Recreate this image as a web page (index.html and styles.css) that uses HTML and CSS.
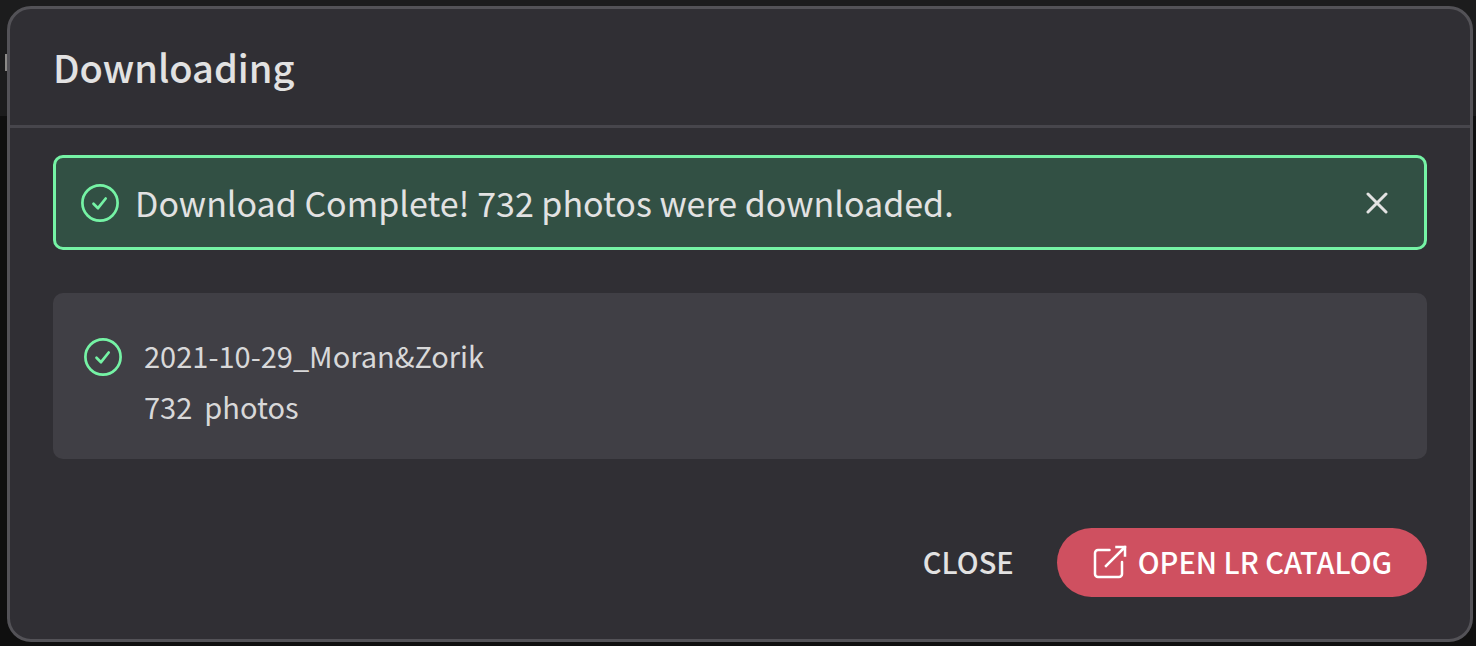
FILE: index.html
```html
<!DOCTYPE html>
<html lang="en">
<head>
    <meta charset="UTF-8">
    <meta name="viewport" content="width=device-width, initial-scale=1.0">
    <title>Downloading</title>
    <link rel="stylesheet" href="styles.css">
</head>
<body>
    <div class="topbar"></div>

    <main class="modal" role="dialog" aria-labelledby="modal-title">
        <header class="modal-header">
            <h1 id="modal-title">Downloading</h1>
        </header>

        <div class="modal-body">
            <div class="alert" role="status">
                <svg class="icon-check" viewBox="0 0 38 38" aria-hidden="true">
                    <circle cx="19" cy="19" r="17.6"/>
                    <path d="M12.5 19.700l4.500 4.500 7.700-9.700"/>
                </svg>
                <p>Download Complete! 732 photos were downloaded.</p>
                <button type="button" class="alert-close" aria-label="Dismiss">
                    <svg viewBox="0 0 22 22" aria-hidden="true">
                        <path d="M2 2l18 18M20 2L2 20"/>
                    </svg>
                </button>
            </div>

            <ul class="downloads">
                <li class="download">
                    <svg class="icon-check" viewBox="0 0 38 38" aria-hidden="true">
                        <circle cx="19" cy="19" r="17.6"/>
                        <path d="M12.5 19.700l4.500 4.500 7.700-9.700"/>
                    </svg>
                    <div class="download-info">
                        <p>2021-10-29_Moran&amp;Zorik</p>
                        <p class="download-count"><span>732</span><span>photos</span></p>
                    </div>
                </li>
            </ul>
        </div>

        <footer class="modal-footer">
            <button type="button" class="btn">CLOSE</button>
            <button type="button" class="btn btn-primary">
                <svg class="icon-open" viewBox="0 0 34 34" aria-hidden="true">
                    <path d="M16.5 5H5a3 3 0 0 0-3 3v21a3 3 0 0 0 3 3h21a3 3 0 0 0 3-3V17"/>
                    <path stroke-linecap="square" stroke-linejoin="miter" d="M13 21L32 2M23.500 2H32v8.500"/>
                </svg>
                OPEN LR CATALOG
            </button>
        </footer>
    </main>
</body>
</html>
```

FILE: styles.css
```css
*,
*:before,
*:after {
    box-sizing: border-box;
}

body {
    margin: 0;
    min-height: 100vh;
    padding: 6px 3px 4px 7px;
    background-color: #0f0f0f;
    color: #e2e2e2;
    font-family: "Noto Sans CJK JP", "Noto Sans", sans-serif;
}

h1,
p,
ul {
    margin: 0;
    padding: 0;
}

button {
    border: 0;
    padding: 0;
    background: none;
    color: inherit;
    font-family: inherit;
    cursor: pointer;
}

svg {
    display: block;
    flex: none;
    fill: none;
    stroke: currentColor;
    stroke-linecap: round;
    stroke-linejoin: round;
}

/* app bar behind the dialog */
.topbar {
    position: absolute;
    top: 0;
    left: 0;
    width: 100%;
    height: 116px;
    background-color: #1c1c1d;
}

.topbar:before {
    content: "";
    position: absolute;
    top: 54px;
    left: 5px;
    width: 3px;
    height: 17px;
    background-color: #8b8987;
}

.modal {
    position: relative;
    border: 3px solid #535257;
    border-radius: 24px;
    background-color: #302f34;
}

.modal-header {
    padding: 28px 43px;
    border-bottom: 3px solid #47464c;
}

.modal-header h1 {
    font-size: 38px;
    font-weight: 500;
    line-height: 60px;
}

.modal-body {
    display: flex;
    flex-direction: column;
    gap: 43px;
    padding: 27px 43px 0;
}

.alert {
    display: flex;
    align-items: center;
    gap: 16px;
    padding: 20px 36px 20px 25px;
    border: 3px solid #75f3a5;
    border-radius: 10px;
    background-color: #325044;
    font-size: 34px;
    line-height: 49px;
}

.alert p {
    flex: 1;
}

.alert-close svg {
    width: 22px;
    height: 22px;
    stroke-width: 3;
}

.icon-check {
    width: 38px;
    height: 38px;
    color: #75f3a5;
    stroke-width: 2.700;
}

.downloads {
    list-style: none;
}

.download {
    display: flex;
    gap: 22px;
    padding: 37px 31px 27px;
    border-radius: 10px;
    background-color: #403f45;
    color: #d8d8d9;
    font-size: 29px;
    line-height: 51px;
}

.download .icon-check {
    margin-top: 8px;
}

.download-count {
    display: flex;
    gap: 12px;
}

.modal-footer {
    display: flex;
    justify-content: flex-end;
    align-items: center;
    gap: 43px;
    padding: 69px 43px 42px;
}

.btn {
    display: flex;
    align-items: center;
    gap: 11px;
    padding: 0 0 2px;
    font-size: 29px;
    font-weight: 500;
    line-height: 67px;
}

.btn-primary {
    padding: 0 35px 2px 36px;
    border-radius: 35px;
    background-color: #cf5060;
    color: #fff;
}

.icon-open {
    width: 34px;
    height: 34px;
    stroke-width: 2.500;
}
```
